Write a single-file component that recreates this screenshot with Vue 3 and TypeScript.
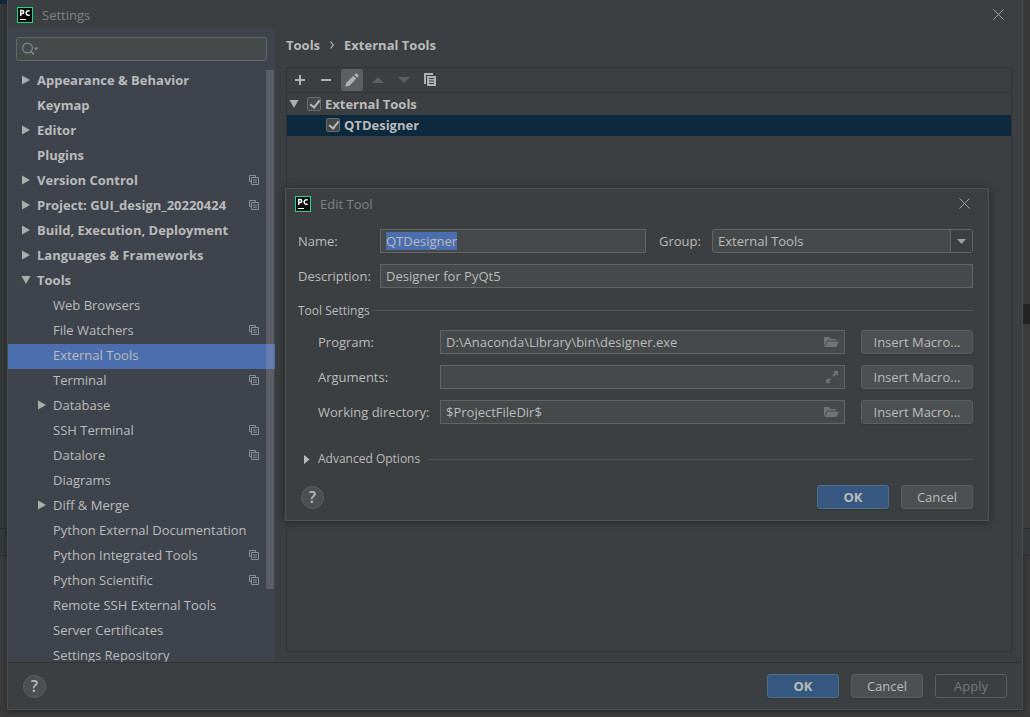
<script setup lang="ts">
import { onMounted, ref } from 'vue'

interface TreeItem {
  label: string
  level: 0 | 1
  arrow?: 'closed' | 'open'
  project?: boolean
  selected?: boolean
}

const items: TreeItem[] = [
  { label: 'Appearance & Behavior', level: 0, arrow: 'closed' },
  { label: 'Keymap', level: 0 },
  { label: 'Editor', level: 0, arrow: 'closed' },
  { label: 'Plugins', level: 0 },
  { label: 'Version Control', level: 0, arrow: 'closed', project: true },
  { label: 'Project: GUI_design_20220424', level: 0, arrow: 'closed', project: true },
  { label: 'Build, Execution, Deployment', level: 0, arrow: 'closed' },
  { label: 'Languages & Frameworks', level: 0, arrow: 'closed' },
  { label: 'Tools', level: 0, arrow: 'open' },
  { label: 'Web Browsers', level: 1 },
  { label: 'File Watchers', level: 1, project: true },
  { label: 'External Tools', level: 1, selected: true },
  { label: 'Terminal', level: 1, project: true },
  { label: 'Database', level: 1, arrow: 'closed' },
  { label: 'SSH Terminal', level: 1, project: true },
  { label: 'Datalore', level: 1, project: true },
  { label: 'Diagrams', level: 1 },
  { label: 'Diff & Merge', level: 1, arrow: 'closed' },
  { label: 'Python External Documentation', level: 1 },
  { label: 'Python Integrated Tools', level: 1, project: true },
  { label: 'Python Scientific', level: 1, project: true },
  { label: 'Remote SSH External Tools', level: 1 },
  { label: 'Server Certificates', level: 1 },
  { label: 'Settings Repository', level: 1 },
]

const toolName = ref('QTDesigner')
const group = ref('External Tools')
const description = ref('Designer for PyQt5')
const groupEnabled = ref(true)
const toolEnabled = ref(true)
const settings = ref([
  { id: 'program', label: 'Program:', value: 'D:\\Anaconda\\Library\\bin\\designer.exe', icon: 'folder' },
  { id: 'arguments', label: 'Arguments:', value: '', icon: 'expand' },
  { id: 'workdir', label: 'Working directory:', value: '$ProjectFileDir$', icon: 'folder' },
])

const nameInput = ref<HTMLInputElement | null>(null)
onMounted(() => {
  nameInput.value?.focus()
  nameInput.value?.select()
})
</script>

<template>
  <div class="page">
    <div class="edge edge-left"><i class="tab"></i><i class="pane"></i><i class="strip"></i><i class="rest"></i></div>
    <div class="window">
      <header class="titlebar">
        <svg class="logo" viewBox="0 0 16 16" aria-hidden="true">
          <rect width="16" height="16" fill="#21d789" /><rect x="1" y="1" width="14" height="14" fill="#0b0b0b" />
          <path d="M3.7 9V3.600h1.500a1.500 1.500 0 0 1 0 3H3.700M12.600 4.200a2.200 2.200 0 1 0 0 3.600" fill="none" stroke="#fff" stroke-width="1.500" />
          <rect x="3" y="12" width="6" height="1" fill="#fff" />
        </svg>
        <h1>Settings</h1>
        <button class="close" aria-label="Close settings">
          <svg viewBox="0 0 11 11"><path d="M.5.5l10 10M10.5.5l-10 10" /></svg>
        </button>
      </header>

      <div class="body">
        <aside class="sidebar">
          <label class="search">
            <svg viewBox="0 0 18 14" aria-hidden="true">
              <circle cx="5.500" cy="6" r="4.900" fill="none" stroke="#7d8a94" stroke-width="1.2" />
              <path d="M9 9.400l3 3" stroke="#7d8a94" stroke-width="1.5" /><path d="M11.500 5.500h5L14 8.500z" fill="#7d8a94" />
            </svg>
            <input type="text" aria-label="Search settings" />
          </label>
          <nav class="tree">
            <ul>
              <li v-for="item in items" :key="item.label" :class="['level' + item.level, { selected: item.selected }]">
                <span class="twisty">
                  <svg v-if="item.arrow" viewBox="0 0 10 10" aria-hidden="true">
                    <path :d="item.arrow === 'open' ? 'M.5 1h9L5 9z' : 'M1 .5v9l8-4.500z'" fill="#adadad" />
                  </svg>
                </span>
                <a href="#">{{ item.label }}</a>
                <svg v-if="item.project" class="project" viewBox="0 0 10 10" aria-hidden="true">
                  <path d="M2.500 6.500h-2v-6h6v2M2.500 2.500h7v7h-7zM4 5h4M4 7.200h4" fill="none" stroke="#87939a" />
                </svg>
              </li>
            </ul>
            <i class="thumb"></i>
          </nav>
        </aside>

        <main class="content">
          <div class="crumbs">
            <span>Tools</span>
            <svg viewBox="0 0 4 8" aria-hidden="true"><path d="M.5.5L3.300 4 .5 7.500" fill="none" stroke="#bbb" stroke-width="1.200" /></svg>
            <span>External Tools</span>
          </div>
          <section class="panel">
            <div class="toolbar">
              <button aria-label="Add"><svg viewBox="0 0 16 16"><path d="M8 3v10M3 8h10" stroke="#afb1b3" stroke-width="2" /></svg></button>
              <button aria-label="Remove"><svg viewBox="0 0 16 16"><path d="M3 8h10" stroke="#afb1b3" stroke-width="2" /></svg></button>
              <button class="active" aria-label="Edit"><svg viewBox="0 0 16 16"><path d="M1.500 14.500l.6-3.600 7.200-7.200 3 3-7.200 7.200zM10.300 2.700l1-1a1.300 1.300 0 0 1 1.800 0l1.200 1.200a1.300 1.300 0 0 1 0 1.800l-1 1z" fill="#afb1b3" /></svg></button>
              <button disabled aria-label="Move up"><svg viewBox="0 0 16 16"><path d="M2 11l6-6 6 6z" fill="#5d5f60" /></svg></button>
              <button disabled aria-label="Move down"><svg viewBox="0 0 16 16"><path d="M2 5l6 6 6-6z" fill="#5d5f60" /></svg></button>
              <button aria-label="Copy">
                <svg viewBox="0 0 16 16"><path d="M2 1h9v2H4v9H2z" fill="#afb1b3" /><path d="M5 4h9v10H5z" fill="#afb1b3" /><path d="M7 6.500h5M7 9h5M7 11.500h5" stroke="#3c3f41" /></svg>
              </button>
            </div>
            <div class="row">
              <svg class="open" viewBox="0 0 10 10" aria-hidden="true"><path d="M.5 1h9L5 9z" fill="#adadad" /></svg>
              <label><input v-model="groupEnabled" type="checkbox" /><span>External Tools</span></label>
            </div>
            <div class="row child">
              <label><input v-model="toolEnabled" type="checkbox" /><span>QTDesigner</span></label>
            </div>
          </section>
        </main>
      </div>

      <footer class="footer">
        <button class="help" aria-label="Help">?</button>
        <span class="grow"></span>
        <button class="btn primary">OK</button>
        <button class="btn">Cancel</button>
        <button class="btn" disabled>Apply</button>
      </footer>
    </div>
    <div class="edge edge-right"><i class="side"></i><i class="notch"></i><i class="brown"></i><i class="strip"></i><i class="rest"></i></div>

    <form class="dialog" role="dialog" aria-label="Edit Tool" @submit.prevent>
      <header class="titlebar">
        <svg class="logo" viewBox="0 0 16 16" aria-hidden="true">
          <rect width="16" height="16" fill="#21d789" /><rect x="1" y="1" width="14" height="14" fill="#0b0b0b" />
          <path d="M3.7 9V3.600h1.500a1.500 1.500 0 0 1 0 3H3.700M12.600 4.200a2.200 2.200 0 1 0 0 3.600" fill="none" stroke="#fff" stroke-width="1.500" />
          <rect x="3" y="12" width="6" height="1" fill="#fff" />
        </svg>
        <h2>Edit Tool</h2>
        <button type="button" class="close" aria-label="Close dialog">
          <svg viewBox="0 0 11 11"><path d="M.5.5l10 10M10.5.5l-10 10" /></svg>
        </button>
      </header>

      <div class="fields">
        <div class="field">
          <label for="name">Name:</label>
          <input id="name" ref="nameInput" v-model="toolName" class="text" type="text" spellcheck="false" />
          <label for="group" class="group-label">Group:</label>
          <div class="combo">
            <select id="group" v-model="group"><option>External Tools</option></select>
            <span class="drop"><svg viewBox="0 0 9 5" aria-hidden="true"><path d="M0 0h9L4.500 5z" fill="#9da0a2" /></svg></span>
          </div>
        </div>
        <div class="field">
          <label for="description">Description:</label>
          <input id="description" v-model="description" class="text" type="text" />
        </div>

        <div class="separator"><span>Tool Settings</span></div>

        <div v-for="s in settings" :key="s.id" class="field setting">
          <label :for="s.id">{{ s.label }}</label>
          <div class="text with-icon">
            <input :id="s.id" v-model="s.value" type="text" />
            <svg v-if="s.icon === 'folder'" viewBox="0 0 16 16" aria-hidden="true">
              <path d="M1 3h5l1.500 2H13v1.500H4.200L1 12.500z" fill="#6e7578" /><path d="M4.800 7.500H16L13.500 13H1.500z" fill="#6e7578" />
            </svg>
            <svg v-else class="expand" viewBox="0 0 14 14" aria-hidden="true">
              <path d="M8 1h5v5l-1.700-1.700-2.600 2.600-1.500-1.500 2.600-2.600zM1 8l1.700 1.700 1.800-1.800L6 9.400l-1.800 1.800L6 13H1z" fill="#6e7578" />
            </svg>
          </div>
          <button type="button" class="btn macro">Insert Macro...</button>
        </div>

        <div class="separator advanced">
          <svg viewBox="0 0 6 9" aria-hidden="true"><path d="M0 0v9l5.500-4.500z" fill="#bbb" /></svg>
          <span>Advanced Options</span>
        </div>
      </div>

      <div class="actions">
        <button type="button" class="help" aria-label="Help">?</button>
        <span class="grow"></span>
        <button type="submit" class="btn primary">OK</button>
        <button type="button" class="btn">Cancel</button>
      </div>
    </form>
  </div>
</template>

<style>
body {
  margin: 0;
  background: #3c3b3a;
}
</style>

<style scoped>
* {
  box-sizing: border-box;
}
.page {
  position: relative;
  display: flex;
  height: 100vh;
  overflow: hidden;
  background: #3c3b3b;
  color: #bbbbbb;
  font: 13px/18px "Open Sans", "Noto Sans", sans-serif;
}
button,
input,
select {
  margin: 0;
  padding: 0;
  border: 0;
  outline: 0;
  background: none;
  color: inherit;
  font: inherit;
}
svg {
  display: block;
  flex: none;
}
.edge {
  display: flex;
  flex: none;
  flex-direction: column;
  width: 7px;
}
.edge i {
  display: block;
}
.edge .tab {
  height: 4px;
  background: #12293d;
}
.edge .pane {
  height: 524px;
  background: #35393a;
}
.edge .strip {
  height: 28px;
  border: solid #2b2d2e;
  border-width: 1px 0;
  background: #35393a;
}
.edge .rest {
  flex: 1;
}
.edge .side {
  height: 304px;
  background: #393939;
}
.edge .notch {
  height: 20px;
  background: #232323;
}
.edge .brown {
  height: 204px;
  background: #3c3b39;
}
.window {
  display: flex;
  flex: 1;
  flex-direction: column;
  min-width: 0;
  margin-bottom: 7px;
  border: 1px solid #4b4d4e;
  border-top: 0;
  background: #3c3f41;
  box-shadow: 0 1px 6px rgba(0, 0, 0, 0.4);
}
.titlebar {
  display: flex;
  flex: none;
  align-items: center;
  height: 29px;
  padding: 0 18px 0 9px;
}
.logo {
  width: 16px;
  height: 16px;
}
h1,
h2 {
  flex: 1;
  margin: 0 0 0 9px;
  color: #808182;
  font-size: 13px;
  font-weight: 400;
}
.close svg {
  width: 11px;
  height: 11px;
  fill: none;
  stroke: #a0a2a3;
}
.body {
  display: flex;
  flex: 1;
  min-height: 0;
}
.sidebar {
  display: flex;
  flex: none;
  flex-direction: column;
  width: 267px;
  background: #3f434c;
}
.search {
  display: flex;
  align-items: center;
  height: 24px;
  margin: 8px;
  padding-left: 5px;
  border: 1px solid #646767;
  border-radius: 3px;
  background: #45494a;
}
.search svg {
  width: 18px;
  height: 14px;
}
.search input {
  flex: 1;
  min-width: 0;
}
.tree {
  position: relative;
  flex: 1;
  min-height: 0;
  overflow: hidden;
}
ul {
  margin: 0;
  padding: 0;
  list-style: none;
}
li {
  display: flex;
  align-items: center;
  height: 25px;
  padding: 0 16px 3px 13px;
}
li.level1 {
  padding-left: 29px;
}
li.level0 {
  font-weight: 700;
}
li.selected {
  background: #4b6eaf;
}
.twisty {
  flex: none;
  width: 16px;
}
.twisty svg,
.open {
  width: 10px;
  height: 10px;
}
li a {
  flex: 1;
  color: inherit;
  text-decoration: none;
  white-space: nowrap;
}
.project {
  width: 10px;
  height: 10px;
}
.thumb {
  position: absolute;
  top: 1px;
  right: 1px;
  width: 8px;
  height: calc(88% - 3px);
  background: rgba(166, 166, 166, 0.28);
}
.content {
  display: flex;
  flex: 1;
  flex-direction: column;
  min-width: 0;
  padding: 7px 10px 10px 11px;
}
.crumbs {
  display: flex;
  gap: 10px;
  align-items: center;
  height: 18px;
  margin-bottom: 13px;
  font-weight: 700;
}
.crumbs svg {
  width: 4px;
  height: 8px;
}
.panel {
  flex: 1;
  border: 1px solid #323536;
}
.toolbar {
  display: flex;
  gap: 4px;
  align-items: center;
  height: 25px;
  padding-left: 2px;
  border-bottom: 1px solid #323536;
}
.toolbar button {
  display: grid;
  place-items: center;
  width: 22px;
  height: 22px;
  border-radius: 3px;
}
.toolbar .active {
  background: #5b6064;
}
.toolbar svg {
  width: 16px;
  height: 16px;
}
.row {
  display: flex;
  gap: 8px;
  align-items: center;
  height: 22px;
  padding-left: 2px;
  font-weight: 700;
}
.row.child {
  height: 21px;
  padding-left: 39px;
  padding-bottom: 1px;
  background: #0d293e;
}
.row label {
  display: flex;
  gap: 4px;
  align-items: center;
}
.row input {
  width: 14px;
  height: 14px;
  appearance: none;
  border: 1px solid #6b6b6b;
  border-radius: 2px;
  background: #43494a;
}
.row input:checked::before {
  display: block;
  width: 4px;
  height: 8px;
  margin: 0 0 0 4px;
  border: solid #bbbbbb;
  border-width: 0 2px 2px 0;
  transform: rotate(38deg);
  content: "";
}
.footer {
  display: flex;
  flex: none;
  gap: 12px;
  align-items: center;
  height: 47px;
  padding: 0 15px;
  border-top: 1px solid #323232;
}
.grow {
  flex: 1;
}
.help {
  width: 23px;
  height: 23px;
  border: 1px solid #5e6060;
  border-radius: 50%;
  background: #4c5052;
  font-size: 16px;
  font-weight: 600;
  line-height: 20px;
}
.btn {
  flex: none;
  width: 72px;
  height: 24px;
  border: 1px solid #5e6060;
  border-radius: 3px;
  background: #4c5052;
  box-shadow: 0 1px 1px rgba(0, 0, 0, 0.15);
}
.btn.primary {
  border-color: #4c708c;
  background: #365880;
  font-weight: 700;
}
.btn:disabled {
  background: none;
  box-shadow: none;
  color: #777777;
}
.btn.macro {
  width: 112px;
  margin-left: 16px;
}
.dialog {
  position: absolute;
  top: 188px;
  right: 41px;
  left: 285px;
  padding-bottom: 11px;
  border: 1px solid #515354;
  background: #3c3f41;
  box-shadow: 0 1px 8px rgba(0, 0, 0, 0.45);
}
.fields {
  display: flex;
  flex-direction: column;
  gap: 11px;
  padding: 11px 15px 0 12px;
}
.field {
  display: flex;
  align-items: center;
  height: 24px;
}
.field > label {
  flex: none;
  width: 82px;
}
.field > .group-label {
  width: 53px;
  margin-left: 13px;
}
.text {
  flex: 1;
  min-width: 0;
  height: 24px;
  padding: 0 5px;
  border: 1px solid #646464;
  background: #45494a;
}
.text::selection {
  background: #4b6eaf;
  color: #bbbbbb;
}
.combo {
  display: flex;
  flex: none;
  width: 261px;
  height: 24px;
  border: 1px solid #646464;
  border-radius: 3px;
  background: #45494a;
}
.combo select {
  flex: 1;
  min-width: 0;
  padding-left: 5px;
  appearance: none;
}
.drop {
  display: grid;
  place-items: center;
  width: 22px;
  border-left: 1px solid #646464;
  background: #3c3f41;
}
.drop svg {
  width: 9px;
  height: 5px;
}
.separator {
  display: flex;
  gap: 3px;
  align-items: center;
  height: 20px;
  padding-top: 3px;
  font-size: 12px;
}
.separator::after {
  flex: 1;
  height: 1px;
  background: #515354;
  content: "";
}
.separator.advanced {
  gap: 8px;
  height: 24px;
  margin-top: 12px;
  padding: 0 0 0 6px;
}
.separator.advanced svg {
  width: 6px;
  height: 9px;
}
.setting {
  padding-left: 20px;
}
.setting > label {
  width: 122px;
}
.with-icon {
  display: flex;
  align-items: center;
}
.with-icon input {
  flex: 1;
  min-width: 0;
}
.with-icon svg {
  width: 16px;
  height: 16px;
}
.with-icon .expand {
  width: 14px;
  height: 14px;
}
.actions {
  display: flex;
  gap: 12px;
  align-items: center;
  margin-top: 14px;
  padding: 0 15px;
}
</style>
